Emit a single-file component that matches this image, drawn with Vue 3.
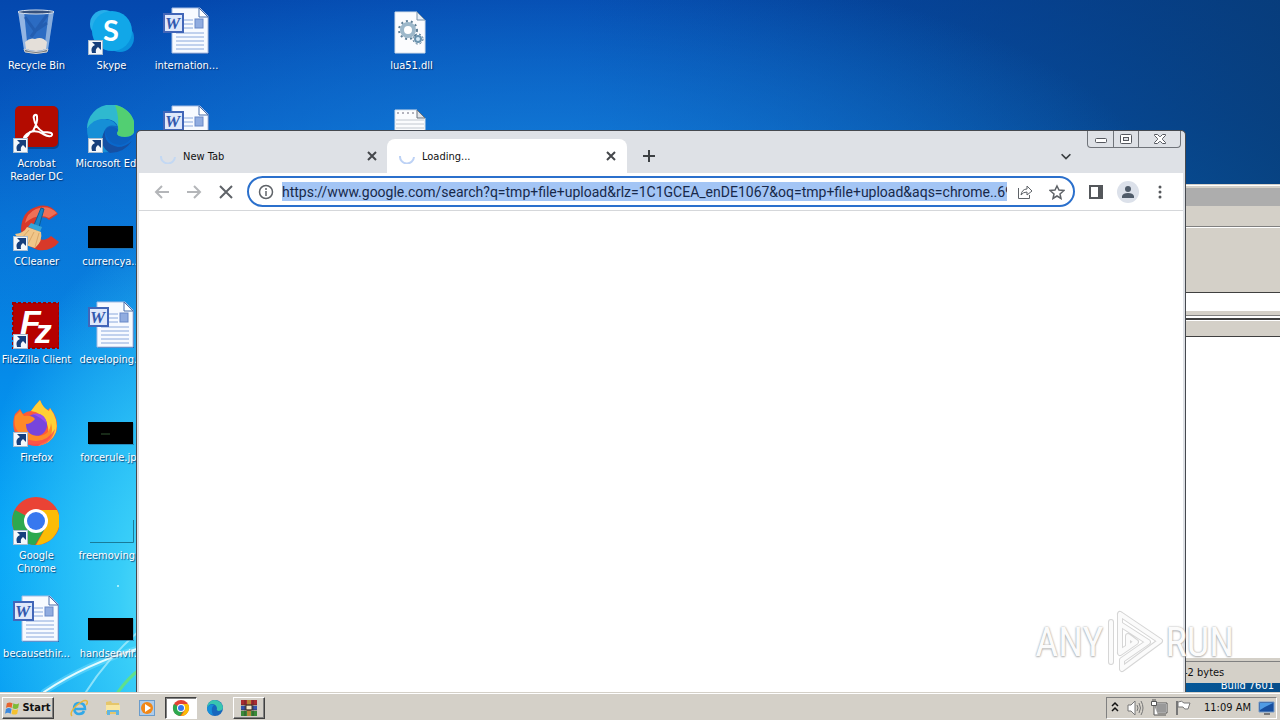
<script setup>
import { ref } from 'vue'

const url = ref('https://www.google.com/search?q=tmp+file+upload&rlz=1C1GCEA_enDE1067&oq=tmp+file+upload&aqs=chrome..69')

const columns = [
  [
    { icon: 'bin', label: 'Recycle Bin' },
    { icon: 'acrobat', label: 'Acrobat Reader DC', link: true },
    { icon: 'ccleaner', label: 'CCleaner', link: true },
    { icon: 'filezilla', label: 'FileZilla Client', link: true },
    { icon: 'firefox', label: 'Firefox', link: true },
    { icon: 'chrome', label: 'Google Chrome', link: true },
    { icon: 'word', label: 'becausethir...' }
  ],
  [
    { icon: 'skype', label: 'Skype', link: true },
    { icon: 'edge', label: 'Microsoft Edge', link: true, nowrap: true },
    { icon: 'black', label: 'currencya...' },
    { icon: 'word', label: 'developing...' },
    { icon: 'black', label: 'forcerule.jpg', mark: true },
    { icon: 'clear', label: 'freemoving...' },
    { icon: 'black', label: 'handsenvir...' }
  ],
  [
    { icon: 'word', label: 'internation...' },
    { icon: 'word', label: '' }
  ],
  [],
  [],
  [
    { icon: 'dll', label: 'lua51.dll' },
    { icon: 'note', label: '' }
  ]
]
</script>

<template>
  <div class="screen">
    <main class="desktop">
      <svg class="streaks" viewBox="0 0 140 120" aria-hidden="true">
        <g fill="none" stroke-linecap="round">
          <path d="M44 120Q86 92 140 76" stroke="#7fe3ff" stroke-width="6" opacity=".45" />
          <path d="M44 120Q86 92 140 76" stroke="#e2fbff" stroke-width="2" />
          <path d="M86 120Q106 88 140 58" stroke="#b5f1fc" stroke-width="2" opacity=".7" />
          <path d="M118 120Q128 106 140 97" stroke="#5fe08c" stroke-width="3" />
        </g>
        <circle cx="118" cy="14" r="1" fill="#c9fbff" />
      </svg>

      <div class="icons">
        <div v-for="(col, c) in columns" :key="c" class="col">
          <a v-for="(item, i) in col" :key="i" class="item" href="#" :aria-label="item.label || 'file'">
            <svg class="pic" viewBox="0 0 48 48">
              <g v-if="item.icon === 'bin'">
                <path d="M7 4h36l-6 39q-12 5-24 0z" fill="#4d86cf" fill-opacity=".55" />
                <path d="M7 4h6l4 41-4-2z" fill="#d8e6f8" opacity=".6" />
                <path d="M38 4h5l-6 39-4 1z" fill="#c5d8ef" opacity=".6" />
                <path d="M14 35q5-5 10-3 7-3 12 3l-1 7q-10 4-20 0z" fill="#e4dfd9" />
                <path d="M14 10l10 14 12-8M36 8L20 30" fill="none" stroke="#1c4f9f" stroke-width="3" opacity=".5" />
                <ellipse cx="25" cy="5" rx="18" ry="2" fill="#35507c" stroke="#dce5f0" />
                <path d="M13 42q12 5 24 0l-1 3q-11 3-22 0z" fill="#777c80" stroke="#d1d2d4" />
              </g>
              <g v-else-if="item.icon === 'acrobat'">
                <rect x="5" y="2" width="43" height="42" rx="5" fill="#07356f" opacity=".6" />
                <rect x="4" y="1" width="43" height="41" rx="5" fill="#b30b00" />
                <path d="M13 33q1-4 9-7 5-9 4-14 0-3-2-2t-1 4q1 8 9 13 10 0 9 3t-9-1q-6-4-13-2-3 6-6 6z" fill="none" stroke="#fff" stroke-width="2" />
              </g>
              <g v-else-if="item.icon === 'ccleaner'">
                <path d="M47 11Q38-1 25 4 11 8 10 26q1 16 17 21 13 2 21-8l-8-6q-9 8-15-1-5-10 2-16 7-4 11 1z" fill="#d8392a" />
                <path d="M46 10Q37 1 25 6 16 10 14 20 27 9 38 15z" fill="#ee7056" />
                <path d="M30 5l3 1-5 18-5-2z" fill="#1785c7" stroke="#0a5e99" />
                <path d="M20 20l11 4-2 5-12-5z" fill="#35a5d8" />
                <path d="M16 24l14 5q2 9-6 16Q10 42 4 31q9-1 12-7z" fill="#f0c689" />
                <path d="M18 27l-8 9M23 29l-6 12M28 30l-4 14" stroke="#d9a768" />
              </g>
              <g v-else-if="item.icon === 'filezilla'">
                <rect x="2" y="2" width="46" height="45" fill="#b60000" stroke="#9d0000" stroke-width="2" stroke-dasharray="3 2" />
                <text x="9" y="33" class="fz">F<tspan dx="-6" dy="9">z</tspan></text>
              </g>
              <g v-else-if="item.icon === 'firefox'">
                <path d="M4 15l5-5 3 5q4-3 8-3Q25 5 29 1q3 8 8 10l2-2q8 9 7 20-2 15-20 18Q8 46 3 31 1 23 4 15z" fill="#ff5a36" />
                <path d="M20 12q5-7 9-11 3 8 9 11l1-3q9 12 6 24-5 12-18 14 14-10 9-22Q31 13 20 12z" fill="#ffcf35" />
                <circle cx="25" cy="26" r="11" fill="#7745dc" />
                <path d="M4 17l5-5 4 5q8-1 11 3-4 5-9 5 0 12 13 12 11-1 12-13 4 15-8 20-15 5-24-7-6-9-4-20z" fill="#ff8a27" />
                <path d="M4 27q5 14 21 15 12 0 19-12-3 16-19 17Q8 46 4 27z" fill="#fb3f55" opacity=".7" />
                <path d="M21 15q13-3 15 10-6-7-15-10z" fill="#9b4eed" />
              </g>
              <g v-else-if="item.icon === 'chrome'">
                <circle cx="25" cy="24" r="24" fill="#ea4335" />
                <path d="M25 24L4 13a24 24 0 0 0 20 35l11-18z" fill="#2da94f" />
                <path d="M25 13h21a24 24 0 0 1-21 35l10-18z" fill="#fbbc05" />
                <circle cx="25" cy="24" r="12" fill="#fff" />
                <circle cx="25" cy="24" r="9" fill="#3778ef" />
              </g>
              <g v-else-if="item.icon === 'word'">
                <path d="M12 2h28l8 8v37H12z" fill="#1d4b9b" opacity=".7" />
                <path d="M11 1h28l8 8v37H11z" fill="#f7faff" stroke="#a6bce3" />
                <path d="M38 1v9h9z" fill="#fff" stroke="#496eab" />
                <path d="M23 13h9M23 17h9M23 21h9M15 26h28M15 30h28M15 34h28M15 38h28M15 42h28" stroke="#8aa8dc" />
                <rect x="34" y="12" width="8" height="9" fill="#90ace0" stroke="#6988c7" />
                <rect x="3" y="7" width="19" height="18" fill="#dfe8fb" stroke="#4266b8" stroke-width="2" />
                <text x="4" y="22" class="wletter">W</text>
              </g>
              <g v-else-if="item.icon === 'skype'">
                <circle cx="18" cy="17" r="14" fill="#27aeea" />
                <circle cx="34" cy="31" r="14" fill="#0a92dd" />
                <circle cx="26" cy="24" r="20" fill="#11a7e8" />
                <text x="17" y="34" class="sletter">S</text>
              </g>
              <g v-else-if="item.icon === 'edge'">
                <path d="M1 24A24 24 0 0 1 49 23q0 9-10 9-8 0-8-4 2-3 1-6-2-7-11-8Q9 13 1 24z" fill="#2fb9cf" />
                <path d="M29 0q18 4 20 22 0 10-10 10-8 0-8-4 2-3 1-6 1-12-3-22z" fill="#52cf72" />
                <path d="M1 24q6-11 18-10 11 1 13 10-8-5-13 1-5 9 6 21-5 2-8 1Q1 42 1 24z" fill="#168fd6" />
                <path d="M19 25q-2 14 13 17 7 0 14-6-8 12-22 12-13-8-5-23z" fill="#1550a4" />
                <path d="M19 25q2-6 12-4 1 4 0 7-1 4 8 4 5 0 8-2-4 9-13 10-13-1-15-15z" fill="#0c5dbb" opacity=".75" />
              </g>
              <g v-else-if="item.icon === 'black'">
                <rect x="2" y="23" width="45" height="22" fill="#000" />
                <path d="M3 45.500h45V24" fill="none" stroke="#276b96" opacity=".6" />
                <path v-if="item.mark" d="M15 35h9" stroke="#315531" />
              </g>
              <g v-else-if="item.icon === 'clear'">
                <path d="M4 45.500h43.500V23" fill="none" stroke="#197b99" />
              </g>
              <g v-else-if="item.icon === 'dll'">
                <path d="M9 5h22l8 8v33H9z" fill="#fbfcfe" stroke="#d5dfe9" />
                <path d="M31 5v8h8z" fill="#e6eef7" stroke="#7891a8" />
                <circle cx="22" cy="23" r="6" fill="#fff" stroke="#9db8ca" stroke-width="4" />
                <circle cx="22" cy="23" r="9" fill="none" stroke="#5f7f96" stroke-width="2" stroke-dasharray="2 3" />
                <circle cx="32" cy="32" r="3" fill="#d6eaf7" stroke="#6b93ae" stroke-width="2" />
                <circle cx="32" cy="32" r="5" fill="none" stroke="#416b8a" stroke-dasharray="2 2" />
              </g>
              <g v-else>
                <path d="M9 5h22l8 8v33H9z" fill="#fbfcfe" stroke="#d5dfe9" />
                <path d="M31 5v8h8z" fill="#dfe3e8" stroke="#68737e" />
                <path d="M11 8h18" stroke="#b3b3bd" stroke-width="2" stroke-dasharray="2 3" />
                <path d="M10 15h28M10 19h28M10 23h28" stroke="#c2c8d0" />
              </g>
              <g v-if="item.link">
                <rect x="2.500" y="33.500" width="14" height="14" fill="#f4f8fc" stroke="#a9bccf" />
                <path d="M6 46q-2-6 3-8l-3-3h9v8l-3-3q-3 2-2 6z" fill="#163f7c" />
              </g>
            </svg>
            <span class="label" :class="{ nowrap: item.nowrap }">{{ item.label }}</span>
          </a>
        </div>
      </div>

      <p class="build">Build 7601</p>

      <section class="backwin" aria-label="File manager">
        <div class="bw-title"></div>
        <div class="bw-menu"></div>
        <div class="bw-tools"></div>
        <div class="bw-path"></div>
        <div class="bw-split"></div>
        <div class="bw-head"></div>
        <div class="bw-list"></div>
        <div class="bw-status">-2 bytes</div>
      </section>

      <section class="browser" aria-label="Browser">
        <div class="strip">
          <div class="tab">
            <svg class="spin" viewBox="0 0 16 16"><path d="M1 8a7 7 0 0 0 14 1" fill="none" stroke="#c3d8f3" stroke-width="2" /></svg>
            <span class="tabname">New Tab</span>
            <button class="x" aria-label="Close New Tab"><svg viewBox="0 0 16 16"><path d="M4 4l8 8M12 4l-8 8" stroke="#44474b" stroke-width="2" /></svg></button>
          </div>
          <div class="tab active">
            <svg class="spin" viewBox="0 0 16 16"><path d="M1 8a7 7 0 0 0 14 1" fill="none" stroke="#bdd2f5" stroke-width="2" /></svg>
            <span class="tabname">Loading...</span>
            <button class="x" aria-label="Close Loading"><svg viewBox="0 0 16 16"><path d="M4 4l8 8M12 4l-8 8" stroke="#44474b" stroke-width="2" /></svg></button>
          </div>
          <button class="plus" aria-label="New tab"><svg viewBox="0 0 16 16"><path d="M8 2v12M2 8h12" stroke="#3c4043" stroke-width="2" /></svg></button>
          <button class="chev" aria-label="Search tabs"><svg viewBox="0 0 16 16"><path d="M3 6l5 5 5-5" fill="none" stroke="#3c4043" stroke-width="2" /></svg></button>
          <div class="winbtns">
            <button aria-label="Minimize"><svg viewBox="0 0 24 16"><rect x="6.500" y="7.500" width="11" height="4" rx="1" fill="#fff" stroke="#55585f" /></svg></button>
            <button aria-label="Maximize"><svg viewBox="0 0 24 16"><rect x="6.500" y="3.500" width="11" height="9" rx="1" fill="#fff" stroke="#55585f" /><rect x="9.500" y="6.500" width="5" height="3" fill="#dee1e6" stroke="#55585f" /></svg></button>
            <button class="wclose" aria-label="Close"><svg viewBox="0 0 24 16"><path d="M6.500 3.500h3l2 2h1l2-2h3v1l-3 3v1l3 3v1h-3l-2-2h-1l-2 2h-3v-1l3-3v-1l-3-3z" fill="#fff" stroke="#55585f" /></svg></button>
          </div>
        </div>

        <div class="toolbar">
          <button class="tb" aria-label="Back"><svg viewBox="0 0 16 16"><path d="M15 8H2M8 2L2 8l6 6" fill="none" stroke="#b4b6b9" stroke-width="2" /></svg></button>
          <button class="tb" aria-label="Forward"><svg viewBox="0 0 16 16"><path d="M1 8h13M8 2l6 6-6 6" fill="none" stroke="#b4b6b9" stroke-width="2" /></svg></button>
          <button class="tb" aria-label="Stop"><svg viewBox="0 0 16 16"><path d="M2 2l12 12M14 2L2 14" stroke="#5f6368" stroke-width="2" /></svg></button>
          <div class="omni">
            <button class="ob info" aria-label="Site information"><svg viewBox="0 0 16 16"><circle cx="8" cy="8" r="6.500" fill="none" stroke="#5f6368" stroke-width="1.500" /><path d="M8 7v5M8 4v2" stroke="#5f6368" stroke-width="1.500" /></svg></button>
            <input v-model="url" class="url" aria-label="Address" spellcheck="false" />
            <button class="ob share" aria-label="Share"><svg viewBox="0 0 16 16"><path d="M1.500 4v10.500h11V11M4 11q1-6 6-6V2l5 5-5 4V8q-4 0-6 3z" fill="none" stroke="#5f6368" /></svg></button>
            <button class="ob star" aria-label="Bookmark"><svg viewBox="0 0 16 16"><path d="M8 2l2 4 5 .5-4 3.500 1 4.500-4-2.500-4 2.500 1-4.500-4-3.500 5-.5z" fill="none" stroke="#5f6368" stroke-width="1.500" /></svg></button>
          </div>
          <button class="tb side" aria-label="Side panel"><svg viewBox="0 0 16 16"><path d="M1 1h14v14H1z" fill="#54575b" /><path d="M3 3h7v10H3z" fill="#fff" /></svg></button>
          <button class="tb ava" aria-label="Profile"><svg viewBox="0 0 22 22"><circle cx="11" cy="11" r="11" fill="#dce1ea" /><circle cx="11" cy="8" r="3" fill="#4f5b69" /><path d="M5 17v-2q1-3 6-3t6 3v2z" fill="#4f5b69" /></svg></button>
          <button class="tb" aria-label="Menu"><svg viewBox="0 0 16 16" fill="#54575b"><circle cx="8" cy="3" r="1.500" /><circle cx="8" cy="8" r="1.500" /><circle cx="8" cy="13" r="1.500" /></svg></button>
        </div>
        <div class="page"></div>
      </section>

      <div class="mark">
        <span>ANY</span>
        <svg viewBox="0 0 60 64">
          <g fill="none" stroke-linejoin="round" stroke-linecap="round">
            <path d="M15 4l40 27-38 28V50l26-18-28-18V4M15 14v28l8-5V26l8 6-16 11M6 12v40" stroke="#d6d6d6" stroke-width="6" />
            <path d="M15 4l40 27-38 28V50l26-18-28-18V4M15 14v28l8-5V26l8 6-16 11M6 12v40" stroke="#fbfbfb" stroke-width="4" />
          </g>
        </svg>
        <span>RUN</span>
      </div>
    </main>

    <footer class="taskbar">
      <button class="start">
        <svg viewBox="0 0 16 16">
          <path d="M2 3q3-2 6 0L7 8Q4 6 1 8z" fill="#e6642e" />
          <path d="M9 3q3 2 6 0l-1 5q-3 2-6 0z" fill="#7dbb36" />
          <path d="M1 9q3-2 6 0l-1 5q-3-2-6 0z" fill="#3c8ade" />
          <path d="M8 9q3 2 6 0l-1 5q-3 2-6 0z" fill="#f4c12f" />
        </svg>
        Start
      </button>
      <nav class="quick">
        <button aria-label="Internet Explorer"><svg viewBox="0 0 18 18"><path d="M4 10h11q0-6-6-6-5 0-5 6 1 5 5 5 4 0 5-3" fill="none" stroke="#31a8e8" stroke-width="2.500" /><path d="M2 17Q-1 14 6 7q8-7 11-5 1 2-1 4" fill="none" stroke="#e9b738" stroke-width="1.500" /></svg></button>
        <button aria-label="Explorer"><svg viewBox="0 0 18 18"><path d="M2 3l5-1 1 2h7v11H2z" fill="#e5c66b" /><path d="M2 6h14v6H2z" fill="#f9e6a0" /><path d="M3 16v-5h12v5h-3v-3H6v3z" fill="#60b5e1" /></svg></button>
        <button aria-label="Media Player"><svg viewBox="0 0 18 18"><rect x="1.500" y="1.500" width="15" height="15" fill="#aecceb" stroke="#6a9ccb" /><circle cx="9" cy="9" r="6" fill="#f28817" /><path d="M7 5l6 4-6 4z" fill="#fff" /></svg></button>
        <button class="on" aria-label="Chrome"><svg viewBox="0 0 18 18"><circle cx="9" cy="9" r="8" fill="#e44234" /><path d="M9 9L2 5a8 8 0 0 0 6 12l4-6z" fill="#2da94f" /><path d="M9 5h7a8 8 0 0 1-7 12l4-6z" fill="#fbbc05" /><circle cx="9" cy="9" r="4" fill="#fff" /><circle cx="9" cy="9" r="3" fill="#3778ef" /></svg></button>
        <button aria-label="Edge"><svg viewBox="0 0 18 18"><circle cx="9" cy="9" r="8" fill="#1767bd" /><path d="M1 9q1-8 8-8 7 1 8 8-1 3-5 3-2-1-1-3-1-4-5-4-3 0-5 4z" fill="#38c6b0" /><path d="M1 9q3-5 7-3-4 3-1 10-6-1-6-7z" fill="#168fd9" /></svg></button>
        <button class="raised" aria-label="WinRAR"><svg viewBox="0 0 18 18"><path d="M1 1h16v5H1z" fill="#a92b31" /><path d="M1 7h16v4H1z" fill="#3454ae" /><path d="M1 12h16v5H1z" fill="#398a38" /><path d="M7 1h4v16H7z" fill="#b68739" /><path d="M6 6h6v5H6z" fill="#f1e5c9" stroke="#4b3928" /><path d="M1 6h16M1 11h16M5 1v16M13 1v16" stroke="#34282a" opacity=".6" /></svg></button>
      </nav>
      <div class="tray">
        <button aria-label="Show hidden icons"><svg class="up" viewBox="0 0 10 14"><path d="M2 5l3-3 3 3M2 10l3-3 3 3" fill="none" stroke="#111" stroke-width="1.500" /></svg></button>
        <svg viewBox="0 0 18 18"><path d="M2 6h3l4-4v14l-4-4H2z" fill="#fff" stroke="#777" /><path d="M11 6q2 3 0 6M13 4q3 5 0 10M15 2q4 7 0 14" fill="none" stroke="#777" /></svg>
        <svg viewBox="0 0 18 18"><path d="M6.500 4.500h10v9h-10z" fill="#999" stroke="#fff" /><path d="M6 4h11v10H6z" fill="none" stroke="#555" /><path d="M1.500 2.500h5v4h-5zM4 6v10h4M8 16h8" fill="#fff" stroke="#555" /><path d="M3 0v3M5 0v3" stroke="#555" /></svg>
        <svg viewBox="0 0 18 18"><path d="M3 2v14" stroke="#777" stroke-width="2" /><path d="M4 3q4-2 6 1h6l-2 6q-4 1-5-2H4z" fill="#fff" stroke="#777" /></svg>
        <time>11:09 AM</time>
        <svg viewBox="0 0 18 18"><path d="M2 3h15v10H2z" fill="#174f9f" stroke="#779bc6" /><path d="M3 4h13q-7 3-13 7z" fill="#4f9be4" /><path d="M7 14h6v2H7z" fill="#777" /></svg>
      </div>
    </footer>
  </div>
</template>

<style>
html, body { margin: 0; }
</style>

<style scoped>
* { box-sizing: border-box; }
button { border: 0; padding: 0; background: none; font: inherit; color: inherit; display: flex; align-items: center; justify-content: center; flex: none; }
svg { display: block; flex: none; }
.screen {
  height: 100vh; overflow: hidden; display: flex; flex-direction: column;
  font-family: "DejaVu Sans Condensed", "DejaVu Sans", sans-serif; font-size: 11px; color: #111;
}
.desktop {
  flex: 1; min-height: 0; position: relative; overflow: hidden;
  background:
    radial-gradient(ellipse 230px 380px at 200px 600px, #6eebf8 0%, #38cdf8 35%, rgba(20, 175, 245, 0) 100%),
    radial-gradient(ellipse 620px 240px at 540px 200px, rgba(22, 130, 220, .9) 0%, rgba(18, 110, 205, 0) 100%),
    linear-gradient(90deg, rgba(2, 50, 120, 0) 45%, rgba(8, 58, 112, .8) 100%),
    linear-gradient(180deg, #0448ae 0%, #0558c0 17%, #0672d6 32%, #058cea 55%, #00a2f8 78%, #029af2 100%);
}
.streaks { position: absolute; left: 0; bottom: 0; width: 140px; height: 120px; }
.icons { position: relative; display: flex; padding-top: 7px; }
.col { width: 75px; margin-left: -1px; margin-right: 1px; display: flex; flex-direction: column; }
.item { height: 98px; display: flex; flex-direction: column; align-items: center; color: #fff; text-decoration: none; }
.pic { width: 48px; height: 48px; margin-right: 3px; }
.label { width: 72px; margin-top: 4px; line-height: 13px; text-align: center; text-shadow: 1px 1px 1px rgba(0, 30, 80, .7); }
.nowrap { white-space: nowrap; }
.wletter { font: italic bold 17px "Liberation Serif", serif; fill: #3158ae; }
.sletter { font: bold 29px Lato, sans-serif; fill: #fff; }
.fz { font: italic bold 34px "Liberation Sans", sans-serif; fill: #fff; }
.build { position: absolute; right: 6px; bottom: 0; margin: 0; color: #fff; line-height: 13px; }

.backwin { position: absolute; left: 1000px; right: -8px; top: 184px; bottom: 9px; display: flex; flex-direction: column; background: #d4d0c8; border-top: 1px solid #d4d0c8; box-shadow: inset 0 1px #fff; }
.bw-title { height: 18px; margin-top: 3px; background: #adadad; }
.bw-menu { height: 21px; border-bottom: 1px solid #808080; }
.bw-tools { height: 66px; border-top: 1px solid #fff; border-bottom: 1px solid #404040; }
.bw-path { height: 19px; background: #fff; border-bottom: 1px solid #d4d0c8; }
.bw-split { height: 8px; border-top: 3px solid #d4d0c8; border-bottom: 2px solid #404040; background: linear-gradient(#808080 1px, #fff 1px); }
.bw-head { height: 17px; border-top: 1px solid #fff; border-bottom: 1px solid #404040; }
.bw-list { flex: 1; background: #fff; border-bottom: 1px solid #d4d0c8; }
.bw-status { height: 22px; margin-top: 2px; border-top: 1px solid #808080; padding-left: 184px; line-height: 22px; }

.browser { position: absolute; left: 136px; right: 94px; top: 130px; bottom: 0; display: flex; flex-direction: column; background: #dee1e6; border: 1px solid #46494f; border-bottom: 0; border-radius: 5px 5px 0 0; padding: 0 2px; overflow: hidden; }
.strip { height: 42px; display: flex; align-items: flex-end; position: relative; }
.tab { width: 240px; height: 34px; margin-left: 9px; display: flex; align-items: center; padding: 0 8px 0 12px; }
.tab + .tab { margin-left: -1px; }
.tab.active { background: #fff; border-radius: 8px 8px 0 0; }
.spin { width: 16px; height: 16px; }
.tabname { flex: 1; margin-left: 7px; }
.x, .x svg { width: 16px; height: 16px; }
.plus { width: 44px; height: 34px; }
.plus svg { width: 16px; height: 16px; }
.chev { width: 32px; height: 34px; margin-left: auto; margin-right: 101px; }
.chev svg { width: 14px; height: 14px; }
.winbtns { position: absolute; right: 2px; top: 0; display: flex; border: 1px solid #70747a; border-top: 0; border-radius: 0 0 4px 4px; }
.winbtns button { width: 25px; height: 16px; }
.winbtns button + button { border-left: 1px solid #70747a; }
.winbtns .wclose { width: 42px; }
.winbtns svg { width: 24px; height: 16px; }
.toolbar { height: 38px; background: #fff; border-bottom: 1px solid #d5d7da; display: flex; align-items: center; padding: 0 7px; }
.tb { width: 32px; height: 32px; }
.tb svg { width: 16px; height: 16px; }
.tb.ava svg { width: 22px; height: 22px; }
.omni { flex: 1; min-width: 0; height: 31px; margin: 0 5px; display: flex; align-items: center; border: 2px solid #2b70cc; border-radius: 16px; }
.ob { width: 32px; height: 27px; }
.ob svg { width: 16px; height: 16px; }
.info { width: 33px; }
.url { flex: 1; min-width: 0; height: 19px; border: 0; padding: 0; outline: 0; background: #a3c5f5; color: #17294a; font: 14px Roboto, sans-serif; }
.share { margin-left: 2px; }
.page { flex: 1; background: #fff; }

.mark { position: absolute; right: 46px; bottom: 18px; display: flex; align-items: center; font: 40px "Roboto Condensed", "Liberation Sans Narrow", "Liberation Sans", sans-serif; color: #fbfbfb; text-shadow: 0 0 2px #a0a0a0, 0 1px 2px #bbb; }
.mark svg { width: 60px; height: 64px; margin: 0 1px; }

.taskbar { height: 28px; flex: none; background: #d4d0c8; border-top: 1px solid #d4d0c8; box-shadow: inset 0 1px #fff; display: flex; align-items: center; padding: 2px 3px 0 2px; }
.start, .raised { border: 1px solid; border-color: #fff #404040 #404040 #fff; box-shadow: inset -1px -1px #808080; }
.start { width: 52px; height: 22px; font-weight: bold; font-size: 11px; gap: 2px; }
.start svg { width: 15px; height: 16px; }
.quick { display: flex; margin-left: 9px; gap: 2px; }
.quick button { width: 32px; height: 22px; }
.quick svg { width: 18px; height: 18px; }
.quick .on { background: #fff; border: 1px solid; border-color: #404040 #fff #fff #404040; box-shadow: inset 1px 1px #808080; }
.tray { margin-left: auto; height: 22px; display: flex; align-items: center; gap: 6px; padding: 0 1px 0 3px; border: 1px solid; border-color: #808080 #fff #fff #808080; }
.tray svg { width: 18px; height: 18px; }
.tray .up { width: 10px; height: 14px; }
.tray time { margin-left: 6px; }
</style>
